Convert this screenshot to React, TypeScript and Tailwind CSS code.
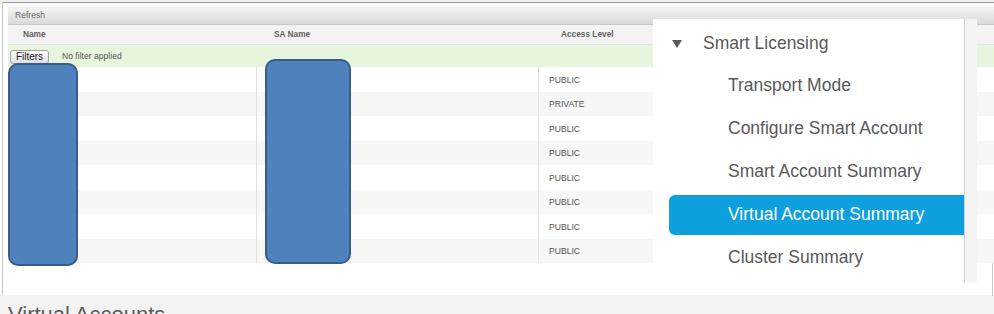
const rows = ['PUBLIC', 'PRIVATE', 'PUBLIC', 'PUBLIC', 'PUBLIC', 'PUBLIC', 'PUBLIC', 'PUBLIC'];

const menuItems = [
  'Transport Mode',
  'Configure Smart Account',
  'Smart Account Summary',
  'Virtual Account Summary',
  'Cluster Summary',
];

const SmartLicensingMenu = () => {
  return (
    <div className="absolute left-[653px] top-[19px] flex h-[263px] w-[324px]">
      <div className="flex w-[312px] flex-col border-r border-[#cfcfcf] bg-white pt-[2px]">
        <div className="flex h-[43px] items-center pt-[2px] text-[17.5px] text-[#58595b]">
          <svg className="ml-[19px] h-[8px] w-[10px]" viewBox="0 0 10 8">
            <path d="M0 0 L10 0 L5 8 Z" fill="#58595b" />
          </svg>
          <span className="ml-[21px]">Smart Licensing</span>
        </div>
        {menuItems.map((item) => {
          const active = item === 'Virtual Account Summary';
          return (
            <div key={item} className="flex h-[43px] items-center pl-[16px]">
              <div
                className={`flex h-[40px] flex-1 items-center rounded-l-[6px] pl-[59px] text-[17.5px] ${
                  active ? 'bg-[#0ea0dc] text-white' : 'text-[#58595b]'
                }`}
              >
                {item}
              </div>
            </div>
          );
        })}
      </div>
      <div className="flex-1 bg-[#f4f4f4]" />
    </div>
  );
};

export default function App() {
  return (
    <div className="relative h-[314px] w-[994px] overflow-hidden bg-white font-['Liberation_Sans',Arial,sans-serif]">
      <div className="h-[2px] bg-[#efefef]" />
      <div className="ml-[2px] h-[293px] border-l border-t border-l-[#c4c4c4] border-t-[#9c9c9c] pl-[5px] pt-[3px]">
        {/* toolbar */}
        <div className="flex h-[19px] items-center border-b border-[#c9c9c9] bg-gradient-to-b from-[#f6f6f6] to-[#dadada] pl-[7px] text-[8.6px] text-[#6a6a6a]">
          Refresh
        </div>
        {/* column headers */}
        <div className="flex h-[20px] items-center border-b border-[#e4e4e4] bg-[#f3f3f3] text-[8.3px] font-bold text-[#5f5f5f]">
          <div className="w-[248px] pl-[15px]">Name</div>
          <div className="w-[282px] pl-[18px]">SA Name</div>
          <div className="flex-1 pl-[23px]">Access Level</div>
        </div>
        {/* filter row */}
        <div className="flex h-[22px] items-center bg-[#e6f5dc] pl-[2px] pt-[1px] text-[8.6px] text-[#555]">
          <button className="h-[14px] w-[39px] rounded-[3px] border border-[#a3a3a3] bg-gradient-to-b from-white to-[#dedede] text-[10px] leading-none text-[#222]">
            Filters
          </button>
          <span className="ml-[13px]">No filter applied</span>
        </div>
        {/* rows */}
        {rows.map((level, i) => (
          <div
            key={i}
            className={`flex h-[24.5px] text-[8.6px] text-[#555] ${i % 2 === 0 ? 'bg-white' : 'bg-[#f7f7f7]'}`}
          >
            <div className="w-[248px]" />
            <div className="w-[282px] border-l border-[#e2e2e2]" />
            <div className="flex flex-1 items-center border-l border-[#e2e2e2] pl-[10px] pt-[2px]">{level}</div>
          </div>
        ))}
      </div>
      <div className="h-[19px] bg-[#f3f3f3] pl-[8px] pt-[9px] text-[22px] leading-none text-[#5e5e5e]">
        Virtual Accounts
      </div>

      {/* redaction blocks */}
      <div className="absolute left-[8px] top-[63px] h-[203px] w-[70px] rounded-[10px] border-2 border-[#385d8a] bg-[#4f81bd]" />
      <div className="absolute left-[265px] top-[59px] h-[205px] w-[86px] rounded-[10px] border-2 border-[#385d8a] bg-[#4f81bd]" />

      <SmartLicensingMenu />
      <div className="absolute left-[992px] top-[263px] h-[33px] w-px bg-[#c8c8c8]" />
    </div>
  );
}
